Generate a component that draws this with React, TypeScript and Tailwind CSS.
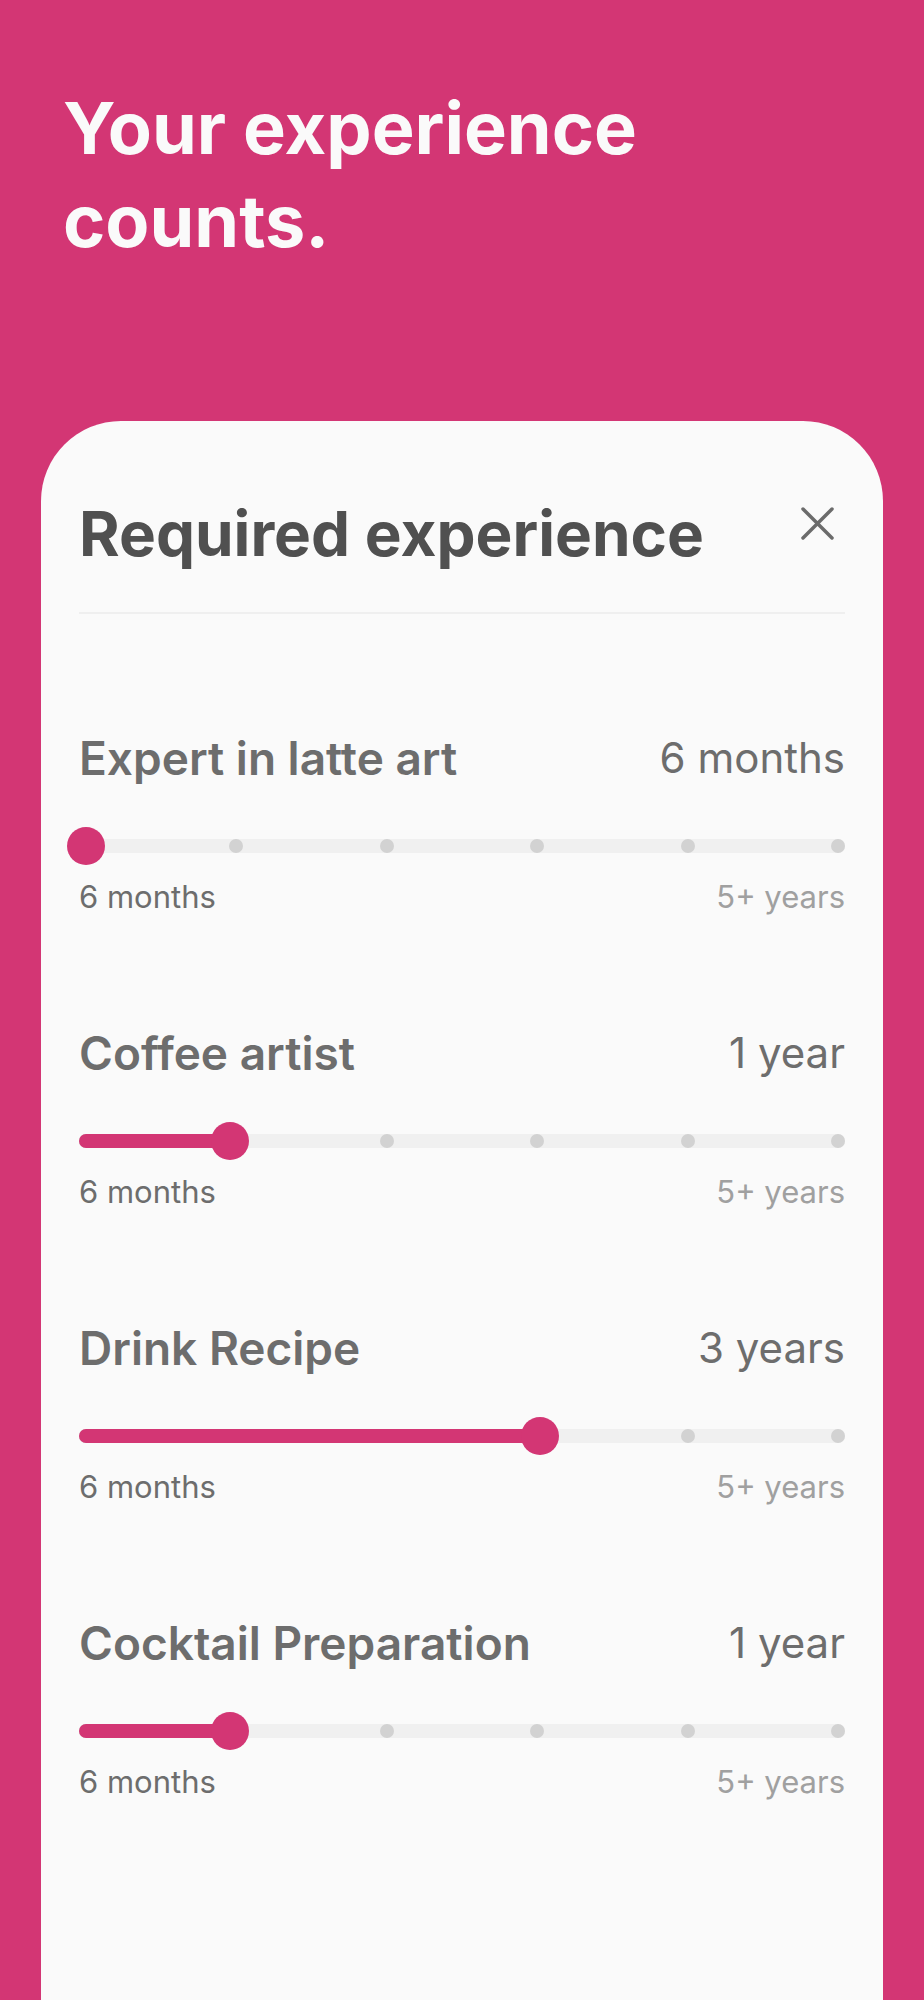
import React from "react";

type Skill = {
  name: string;
  value: string;
  pos: number; // 0..1 along the track
};

const STEPS = 6;

const skills: Skill[] = [
  { name: "Expert in latte art", value: "6 months", pos: 0 },
  { name: "Coffee artist", value: "1 year", pos: 0.192 },
  { name: "Drink Recipe", value: "3 years", pos: 0.604 },
  { name: "Cocktail Preparation", value: "1 year", pos: 0.192 },
];

// point along the track (7px inset = half track height)
function trackPos(t: number) {
  return `calc(7px + (100% - 14px) * ${t})`;
}

function StepSlider({ pos }: { pos: number }) {
  return (
    <div className="relative h-[38px]">
      <div className="absolute left-0 right-0 top-[12px] h-[14px] rounded-full bg-[#f0f0f0]" />
      {Array.from({ length: STEPS }).map((_, i) => (
        <div
          key={i}
          className="absolute top-[12px] h-[14px] w-[14px] -translate-x-1/2 rounded-full bg-[#d2d2d2]"
          style={{ left: trackPos(i / (STEPS - 1)) }}
        />
      ))}
      {pos > 0 && (
        <div
          className="absolute left-0 top-[12px] h-[14px] rounded-full bg-[#d33674]"
          style={{ width: trackPos(pos) }}
        />
      )}
      <div
        className="absolute top-0 h-[38px] w-[38px] -translate-x-1/2 rounded-full bg-[#d33674]"
        style={{ left: trackPos(pos) }}
      />
    </div>
  );
}

function SkillRow({ skill }: { skill: Skill }) {
  return (
    <section className="mb-[113px]">
      <div className="flex items-start justify-between">
        <h3 className="text-[46px] leading-[52px] font-semibold text-[#6d6d6d]">{skill.name}</h3>
        <span className="text-[42px] leading-[52px] font-normal text-[#6d6d6d]">{skill.value}</span>
      </div>
      <div className="mt-[43px]">
        <StepSlider pos={skill.pos} />
      </div>
      <div className="mt-[15px] flex justify-between text-[31px] leading-[34px]">
        <span className="text-[#6d6d6d]">6 months</span>
        <span className="text-[#a0a0a0]">5+ years</span>
      </div>
    </section>
  );
}

export default function App() {
  return (
    <div
      className="flex min-h-[2000px] flex-col bg-[#d33674]"
      style={{ fontFamily: "Inter, 'Noto Sans', sans-serif" }}
    >
      {/* Hero */}
      <h1 className="pl-[63px] pt-[81px] text-[72px] leading-[93px] font-bold text-[#fafafa]">
        Your experience
        <br />
        counts.
      </h1>

      {/* Sheet */}
      <div className="mx-[41px] mt-[154px] flex-1 rounded-t-[80px] bg-[#fafafa] px-[38px] pt-[77px]">
        <div className="flex items-start justify-between">
          <h2 className="text-[62px] leading-[72px] font-bold text-[#505050]">Required experience</h2>
          <button className="mr-[11px] mt-[9px] text-[#6b6b6b]" aria-label="Close">
            <svg width="33" height="33" viewBox="0 0 33 33" fill="none">
              <path d="M2 2L31 31M31 2L2 31" stroke="currentColor" strokeWidth="3.5" strokeLinecap="round" />
            </svg>
          </button>
        </div>
        <div className="mt-[42px] h-[2px] bg-[#efefef]" />

        <div className="pt-[118px]">
          {skills.map((s) => (
            <SkillRow key={s.name} skill={s} />
          ))}
        </div>
      </div>
    </div>
  );
}
